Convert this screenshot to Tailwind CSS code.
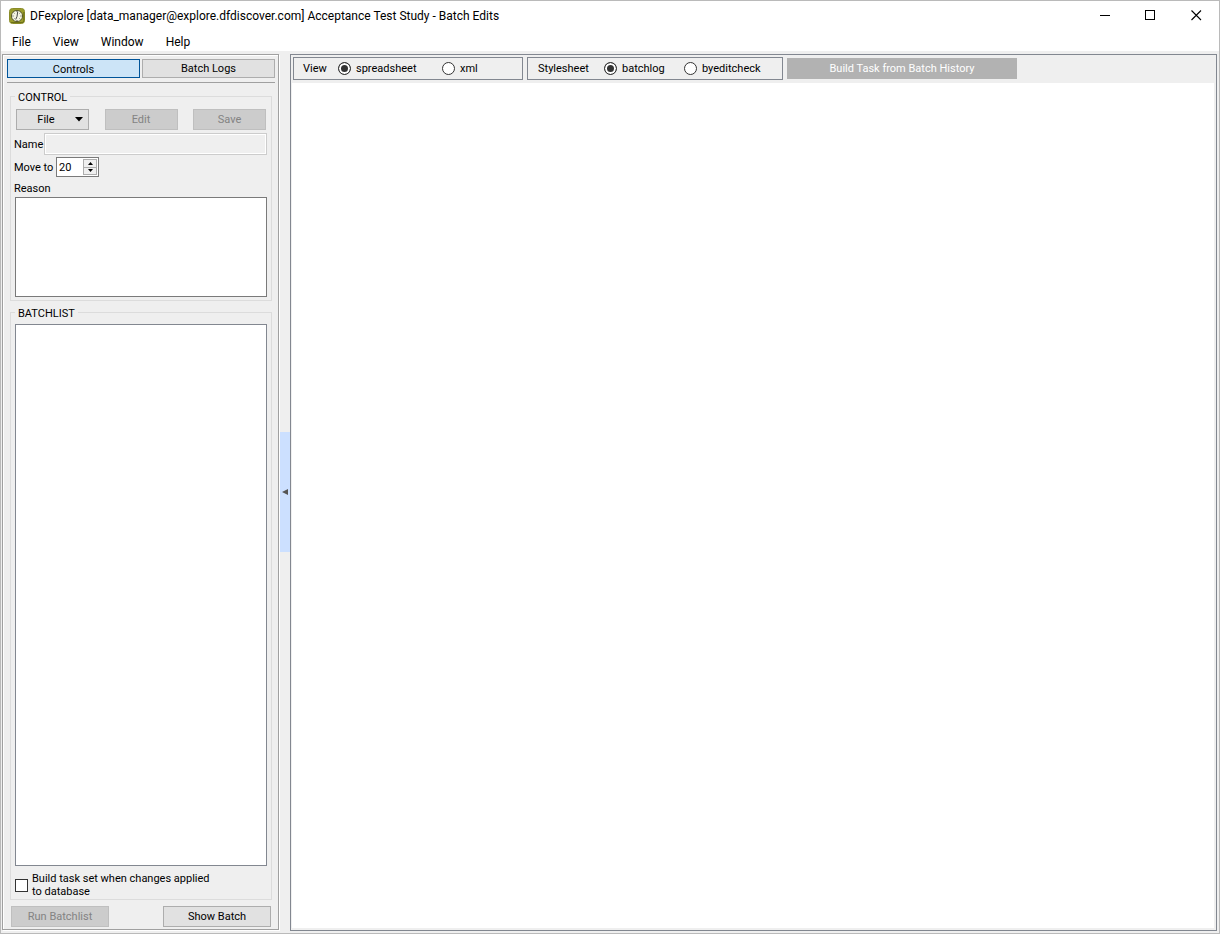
<!DOCTYPE html>
<html lang="en">
  <head>
    <meta charset="UTF-8" />
    <meta name="viewport" content="width=device-width, initial-scale=1.0" />
    <title>DFexplore - Batch Edits</title>
    <script src="https://cdn.jsdelivr.net/npm/@tailwindcss/browser@4"></script>
  </head>
  <body class="h-screen flex flex-col border border-[#bababa] bg-[#efefef] text-black text-[11px] leading-[13px] font-['Roboto',sans-serif]">
    <!-- Title bar and menu -->
    <header class="bg-white h-[50px] shrink-0 text-[12px] leading-4">
      <div class="h-[30px] flex items-center pl-2">
        <svg class="w-4 h-4 mr-[5px]" viewBox="0 0 16 16">
          <rect x="0.5" y="0.5" width="15" height="15" rx="3" fill="#9a9c2c" stroke="#8a8c28" />
          <path d="M2 14.5h12l.8-2V4" fill="none" stroke="#6d7018" />
          <circle cx="8" cy="8" r="5.6" fill="#f4f4e2" stroke="#5c5d2b" />
          <path d="M8.7 3.8 8 8.5l-1.3 3M8 3v1M8 12v1M3.5 8h1M11.5 8h1M4.8 4.8l.6.6M11.2 4.8l-.6.6M4.8 11.2l.6-.6M11.2 11.2l-.6-.6" fill="none" stroke="#333" stroke-width="0.9" />
        </svg>
        <h1 class="flex-1">DFexplore [data_manager@explore.dfdiscover.com] Acceptance Test Study - Batch Edits</h1>
        <button type="button" aria-label="Minimize" class="w-[46px] h-7 flex justify-center pt-[8px]">
          <svg class="w-[11px] h-[11px]" viewBox="0 0 11 11" shape-rendering="crispEdges"><path d="M0 5.5h10" stroke="#000" /></svg>
        </button>
        <button type="button" aria-label="Maximize" class="w-[45px] h-7 flex justify-center pt-[8px]">
          <svg class="w-[11px] h-[11px]" viewBox="0 0 11 11" shape-rendering="crispEdges"><path d="M.5.5h9v9h-9z" fill="none" stroke="#000" /></svg>
        </button>
        <button type="button" aria-label="Close" class="w-[46px] h-7 flex justify-center pt-[8px]">
          <svg class="w-[11px] h-[11px]" viewBox="0 0 11 11"><path d="M.5.5l9.5 9.5M10 .5L.5 10" stroke="#000" stroke-width="1.1" /></svg>
        </button>
      </div>
      <nav class="flex gap-[22px] pl-[11px] pt-[3px]">
        <button type="button">File</button>
        <button type="button">View</button>
        <button type="button">Window</button>
        <button type="button">Help</button>
      </nav>
    </header>

    <main class="flex-1 min-h-0 flex pt-[3px] pl-px pr-[2px] pb-[2px]">
      <!-- Side panel -->
      <aside class="w-[277px] mb-px shrink-0 flex flex-col border border-[#a0a0a0] shadow-[inset_1px_1px_0_#fff,1px_1px_0_#fff] p-1 pb-[2px]">
        <div class="flex gap-[2px] pb-1 border-b border-[#a0a0a0] mr-[-1px]">
          <button type="button" class="flex-1 h-[19px] pt-px border border-[#005499] bg-[#cce4f7]">Controls</button>
          <button type="button" class="flex-1 h-[19px] border border-[#adadad] bg-[#e1e1e1]">Batch Logs</button>
        </div>

        <form class="flex-1 min-h-0 flex flex-col px-[3px] pt-2">
          <fieldset class="border border-[#dcdcdc] pl-1 pr-1 pb-[3px] -mr-px">
            <legend class="px-[3px] h-[11px]">CONTROL</legend>
            <div class="flex justify-between px-px pt-[7px] pb-[3px]">
              <button type="button" class="w-[73px] h-[21px] border border-[#adadad] bg-[#e1e1e1] flex items-center">
                <span class="flex-1">File</span>
                <svg class="w-[9px] h-[5px] mr-1" viewBox="0 0 9 5"><path d="M0 0h8L4 4.5z" /></svg>
              </button>
              <button type="button" disabled class="w-[73px] h-[21px] border border-[#bfbfbf] bg-[#cccccc] text-[#838383]">Edit</button>
              <button type="button" disabled class="w-[73px] h-[21px] border border-[#bfbfbf] bg-[#cccccc] text-[#838383]">Save</button>
            </div>
            <div class="flex items-center pb-[2px]">
              <label for="name" class="w-[30px] -ml-px">Name</label>
              <input type="text" id="name" disabled class="flex-1 min-w-0 h-[22px] px-1 border border-[#cccccc] shadow-[inset_0_0_0_1px_#fff]" />
            </div>
            <div class="flex items-center">
              <label for="move" class="w-[42px] -ml-px">Move to</label>
              <div class="w-[43px] h-5 flex border border-[#7a7a7a] bg-white">
                <input type="text" id="move" value="20" class="w-[26px] pl-[2px] outline-none" />
                <div class="w-[14px] h-4 mt-px flex flex-col border border-[#adadad] bg-[#efefef]">
                  <button type="button" aria-label="Increase" class="flex-1 flex items-center justify-center border-b border-[#adadad]">
                    <svg class="w-[5px] h-[3px]" viewBox="0 0 5 3"><path d="M0 3h5L2.5 0z" /></svg>
                  </button>
                  <button type="button" aria-label="Decrease" class="flex-1 flex items-center justify-center">
                    <svg class="w-[5px] h-[3px]" viewBox="0 0 5 3"><path d="M0 0h5L2.5 3z" /></svg>
                  </button>
                </div>
              </div>
            </div>
            <label for="reason" class="block -ml-px pt-[5px] pb-[2px]">Reason</label>
            <textarea id="reason" class="block w-full h-[100px] p-1 border border-[#7a7a7a] bg-white resize-none outline-none"></textarea>
          </fieldset>

          <fieldset class="flex-1 min-h-0 mt-[6px] -mr-px border border-[#dcdcdc] px-1">
            <legend class="px-[3px] h-[11px]">BATCHLIST</legend>
            <div class="h-full flex flex-col pt-[6px]">
              <select size="2" aria-label="Batch list" class="block w-full flex-1 min-h-0 border border-[#828790] bg-white outline-none"></select>
              <label class="flex items-center gap-1 pt-[6px] pb-px">
                <input type="checkbox" class="appearance-none w-[13px] h-[13px] border border-[#333] bg-white" />
                <span>Build task set when changes applied<br />to database</span>
              </label>
            </div>
          </fieldset>

          <div class="flex justify-between pt-[6px] pl-px">
            <button type="button" disabled class="w-[98px] h-[21px] border border-[#bfbfbf] bg-[#cccccc] text-[#838383]">Run Batchlist</button>
            <button type="button" class="w-[108px] h-[21px] border border-[#adadad] bg-[#e1e1e1]">Show Batch</button>
          </div>
        </form>
      </aside>

      <!-- Splitter -->
      <button type="button" aria-label="Collapse panel" class="self-center w-[10px] h-[120px] ml-px mb-px flex items-center justify-center bg-[#cce0ff]">
        <svg class="w-[6px] h-[6px]" viewBox="0 0 6 6"><path d="M6 0v6L0 3z" fill="#555" /></svg>
      </button>

      <!-- Batch output -->
      <section class="flex-1 min-w-0 flex flex-col border border-[#828790] p-px pt-[2px]">
        <div class="flex gap-1 h-[26px] px-px">
          <div role="radiogroup" aria-label="View" class="w-[230px] h-[23px] flex items-center border border-[#828790] pl-[9px]">
            <span class="w-[35px]">View</span>
            <label class="w-[104px] flex items-center gap-[5px]">
              <input type="radio" name="view" checked class="appearance-none w-[13px] h-[13px] rounded-full border border-[#333] bg-white checked:bg-[#333] checked:shadow-[inset_0_0_0_2px_#fff]" />
              spreadsheet
            </label>
            <label class="flex items-center gap-[5px]">
              <input type="radio" name="view" class="appearance-none w-[13px] h-[13px] rounded-full border border-[#333] bg-white checked:bg-[#333] checked:shadow-[inset_0_0_0_2px_#fff]" />
              xml
            </label>
          </div>
          <div role="radiogroup" aria-label="Stylesheet" class="w-[256px] h-[23px] flex items-center border border-[#828790] pl-[10px]">
            <span class="w-[66px]">Stylesheet</span>
            <label class="w-[80px] flex items-center gap-[5px]">
              <input type="radio" name="stylesheet" checked class="appearance-none w-[13px] h-[13px] rounded-full border border-[#333] bg-white checked:bg-[#333] checked:shadow-[inset_0_0_0_2px_#fff]" />
              batchlog
            </label>
            <label class="flex items-center gap-[5px]">
              <input type="radio" name="stylesheet" class="appearance-none w-[13px] h-[13px] rounded-full border border-[#333] bg-white checked:bg-[#333] checked:shadow-[inset_0_0_0_2px_#fff]" />
              byeditcheck
            </label>
          </div>
          <button type="button" disabled class="w-[230px] h-[21px] mt-px bg-[#b2b2b2] text-white">Build Task from Batch History</button>
        </div>
        <div class="flex-1 bg-white mr-px mb-px"></div>
      </section>
    </main>
  </body>
</html>
